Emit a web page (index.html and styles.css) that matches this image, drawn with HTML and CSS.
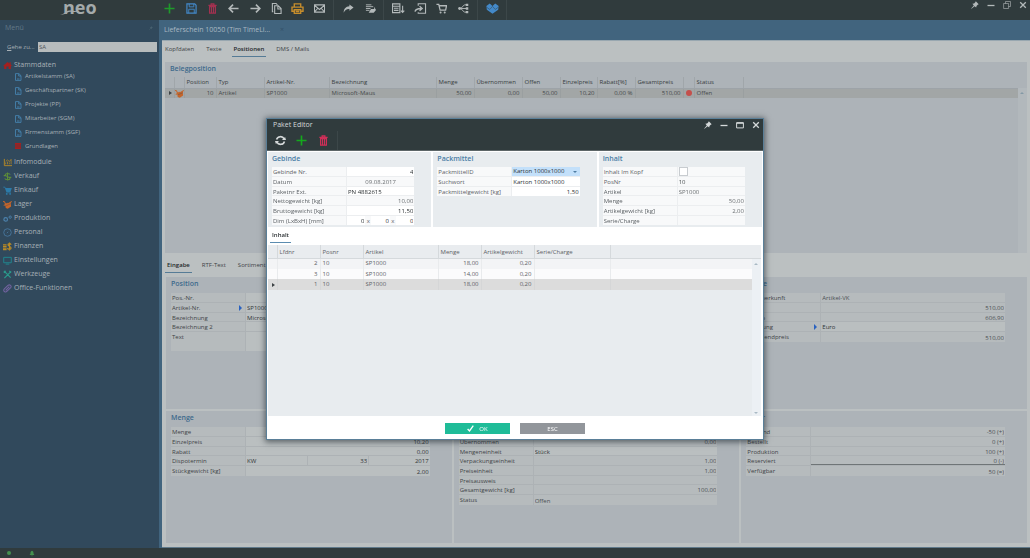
FILE: index.html
```html
<!DOCTYPE html>
<html lang="de">
<head>
<meta charset="utf-8">
<title>neo – Paket Editor</title>
<link rel="stylesheet" href="styles.css">
</head>
<body>
<svg class="defs" aria-hidden="true">
  <symbol id="plus" viewBox="0 0 12 12"><path d="M6 .5v11M.5 6h11" stroke="currentColor" stroke-width="1.8"/></symbol>
  <symbol id="save" viewBox="0 0 12 12" fill="none" stroke="currentColor"><path d="M1 1h8.500l1.500 1.500V11H1z" stroke-width="1.300"/><path d="M3.500 1v3.200h5V1M3 11V6.800h6V11" /></symbol>
  <symbol id="trash" viewBox="0 0 12 12" fill="none" stroke="currentColor"><path d="M1.500 2.500h9M4.500 2V1h3v1" stroke-width="1.300"/><path d="M2.800 4h6.400v7H2.800zM4.900 4v7M7.100 4v7" stroke-width="1.300"/></symbol>
  <symbol id="left" viewBox="0 0 12 12" fill="none" stroke="currentColor" stroke-width="1.800"><path d="M11.500 6H1.500M5.500 1.800L1.300 6l4.200 4.200"/></symbol>
  <symbol id="right" viewBox="0 0 12 12" fill="none" stroke="currentColor" stroke-width="1.800"><path d="M.5 6h10M6.500 1.800L10.700 6l-4.200 4.200"/></symbol>
  <symbol id="copy" viewBox="0 0 12 12" fill="none" stroke="currentColor" stroke-width="1.200"><path d="M4 3h4l3 3v5.500H4zM7.500 3v3.500H11"/><path d="M2.500 9.500h-1v-9h4L7 2"/></symbol>
  <symbol id="print" viewBox="0 0 14 12" fill="none" stroke="currentColor" stroke-width="1.500"><path d="M3.500 4V1h7v3M3 9H1V4.500h12V9h-2M3.500 7.300h7v4h-7zM5 9.300h4"/></symbol>
  <symbol id="mail" viewBox="0 0 12 12" fill="none" stroke="currentColor" stroke-width="1.200"><path d="M.5 2h11v8H.5zM.5 2.500L6 7l5.500-4.500M.8 9.500L4 6M11.200 9.500L8 6"/></symbol>
  <symbol id="forward" viewBox="0 0 12 12"><path d="M7 1.500L11.500 5 7 8.500v-2C4 6.200 2.200 7.500.8 10.500.6 6.500 3 3.700 7 3.500z" fill="currentColor"/></symbol>
  <symbol id="note" viewBox="0 0 12 12" fill="none" stroke="currentColor"><path d="M1 2h6M1 4h8M1 6h5M1 8h4"/><path d="M4 10.500l2.500-4H10V4l2 3.500-2.500 3z" fill="currentColor" stroke="none"/></symbol>
  <symbol id="list" viewBox="0 0 14 12" fill="none" stroke="currentColor"><path d="M.5 1h8v9.500h-8zM.5 3.500h8M2 5.800h5M2 8h5" stroke-width="1.200"/><path d="M11.500 3v7M9.700 8.200l1.800 2 1.800-2" stroke-width="1.200"/></symbol>
  <symbol id="import" viewBox="0 0 13 12" fill="none" stroke="currentColor"><path d="M4 3V.8h8v10.400H4V10" stroke-width="1.200"/><path d="M.5 9.500C1 7 3 6 7 6M5.500 3.500L8.300 6 5.500 8.500" stroke-width="1.500"/></symbol>
  <symbol id="cart" viewBox="0 0 12 12"><path d="M.5 1.500H3l1.500 6.300h6L11.500 3H3.500" fill="none" stroke="currentColor" stroke-width="1.400"/><circle cx="5" cy="10.300" r="1.100" fill="currentColor"/><circle cx="9.500" cy="10.300" r="1.100" fill="currentColor"/></symbol>
  <symbol id="basket" viewBox="0 0 12 12"><path d="M.3 1h2.500l.6 1.500h8.400L10 8H4.500L2.200 2H.3z" fill="currentColor"/><path d="M4.500 9h6" stroke="currentColor"/><circle cx="5" cy="10.500" r="1.200" fill="currentColor"/><circle cx="9.500" cy="10.500" r="1.200" fill="currentColor"/></symbol>
  <symbol id="share" viewBox="0 0 12 12"><path d="M2 6h8M3 6l4-4h2M3 6l4 4h2" fill="none" stroke="currentColor"/><circle cx="1.800" cy="6" r="1.600" fill="currentColor"/><path d="M8.500.7h2.700v2.600H8.500zM8.500 4.700h2.700v2.600H8.500zM8.500 8.700h2.700v2.600H8.500z" fill="currentColor"/></symbol>
  <symbol id="heart" viewBox="0 0 14 12"><path d="M4 .5L7 3.300 10 .5l3.700 2.800-.5 4L7 11.800.8 7.300l-.5-4z" fill="currentColor"/><path d="M.5 4.500L4 7l3-3.300L10 7l3.500-2.500" fill="none" stroke="#303b3d" stroke-width=".5"/></symbol>
  <symbol id="refresh" viewBox="0 0 12 12"><path d="M1.700 5a4.500 4.500 0 0 1 8.300-.8M10.300 7a4.500 4.500 0 0 1-8.300.8" fill="none" stroke="currentColor" stroke-width="1.700"/><path d="M7.600 5.500H12L11 2.200zM4.400 6.500H0l1 3.300z" fill="currentColor"/></symbol>
  <symbol id="pin" viewBox="0 0 8 8"><path d="M4.800.3l2.900 2.900-1 .5-1.200 1.200-.3 1.700L3.600 5.200.5 7.800.2 7.500 2.800 4.400 1.400 2.800l1.700-.3 1.200-1.200z" fill="currentColor"/></symbol>
  <symbol id="min" viewBox="0 0 8 8"><path d="M.5 4.500h7" stroke="currentColor" stroke-width="1.300"/></symbol>
  <symbol id="max" viewBox="0 0 8 8"><path d="M.6 1.600h6.800v5.300H.6zM.6 2.300h6.800" fill="none" stroke="currentColor"/></symbol>
  <symbol id="restore" viewBox="0 0 8 8"><path d="M.6 2.500h5v5h-5zM2.500 2.500v-2h5v5h-2" fill="none" stroke="currentColor" stroke-width=".6"/></symbol>
  <symbol id="close" viewBox="0 0 8 8"><path d="M1.200 1.200l5.600 5.600M6.800 1.200L1.200 6.800" stroke="currentColor" stroke-width="1.300"/></symbol>
  <symbol id="home" viewBox="0 0 10 10"><path d="M5 1L0 5.500h1.300V9h2.500V6.200h2.400V9h2.500V5.500H10L8.500 4V1.500H7.200v1.300z" fill="currentColor"/></symbol>
  <symbol id="doc" viewBox="0 0 8 8"><path d="M1.500.6h3.400L7 2.700v4.700H1.500zM4.700.8V3H7M3 6h2.500" fill="none" stroke="currentColor" stroke-width=".8"/></symbol>
  <symbol id="rows" viewBox="0 0 8 8"><path d="M1 1h6v6H1z" fill="currentColor"/><path d="M1 3h6M1 5h6" stroke="#31495c" stroke-width=".4"/></symbol>
  <symbol id="chart" viewBox="0 0 10 10" fill="none" stroke="currentColor"><path d="M1.500 1v7.500H10" /><path d="M3 7V5M5 7V4M7 7V5M3 4l2-2 2 2 2-2.500V7" stroke-width=".8"/></symbol>
  <symbol id="coin" viewBox="0 0 10 10" fill="none" stroke="currentColor"><path d="M8 3C7.500 1.500 3 .8 2.500 3S8 5.500 7.800 7.300 2.500 8.800 2 7M5 .5v9M.8 4h2.700M6.500 6h2.700" stroke-width="1.200"/></symbol>
  <symbol id="box" viewBox="0 0 10 10"><path d="M0 1.200l1.800.3L3.300 4l1.500-1 .7.500L9.500 1l.5 1-1.300 1L9 7.200 5.300 9.600 3 8.800 2.600 6 1 6.500l-.5-1 1.700-.8L1.300 2.500 0 2.200z" fill="currentColor"/><path d="M3.300 6.500L8.500 4.200" stroke="#31495c" stroke-width=".4"/></symbol>
  <symbol id="gears" viewBox="0 0 10 10" fill="none" stroke="currentColor"><circle cx="3" cy="6" r="2" stroke-width="1.300"/><circle cx="8" cy="3.500" r="1.300"/></symbol>
  <symbol id="clock" viewBox="0 0 10 10" fill="none" stroke="currentColor" stroke-width=".8"><circle cx="5" cy="5" r="4.200"/><path d="M4.300 5.700l1.500-1.500"/></symbol>
  <symbol id="money" viewBox="0 0 10 10" fill="none" stroke="currentColor"><path d="M0 3.200h4M0 5h4M0 6.800h4M0 8.500h4" stroke-width="1.200"/><path d="M9 3C8.500 1.500 5.500 1.500 5.500 3S9.200 5 9 6.800 5.300 8.500 5 6.800M7.200.5v9" stroke-width="1.300"/></symbol>
  <symbol id="screen" viewBox="0 0 10 10" fill="none" stroke="currentColor"><path d="M.8 1.500h8.400v6H.8zM3 9h4"/></symbol>
  <symbol id="tools" viewBox="0 0 10 10" fill="none" stroke="currentColor"><path d="M1 1l7.500 7.500M9 1.500L1.500 9M1 3l2-2M7 1l2 2" stroke-width="1.400"/></symbol>
  <symbol id="clip" viewBox="0 0 10 10" fill="none" stroke="currentColor"><path d="M3 7l4-4.200M2.500 8.800C.5 8.500.5 6.500 1.500 5.500L5.500 1.500c2-1.500 4.500.5 3 2.500l-4.300 4.300C3.500 9 3 9 2.500 8.800z" stroke-width="1.200"/></symbol>
  <symbol id="check" viewBox="0 0 8 8"><path d="M.7 4.500l2.200 2.300L7.200.8" fill="none" stroke="currentColor" stroke-width="1.500"/></symbol>
  <symbol id="bell" viewBox="0 0 8 8"><path d="M4 .3C5.800.8 6 2 6 4l1.200 2H.8L2 4c0-2 .2-3.200 2-3.700zM3 6.700h2L4 8z" fill="currentColor"/></symbol>
</svg>

<div class="app">
  <header class="topbar">
    <div class="logo">
      <svg class="swoosh" viewBox="0 0 20 6"><path d="M0 5.500C5 5.500 4 2.500 9 1.500c4-.5 6 1 11 1-5 1.500-8-.3-11 .5C6 4 5 6 0 5.500z" fill="currentColor"/></svg>neo
    </div>
    <nav class="tools" aria-label="Werkzeugleiste">
      <div class="group g8">
        <button class="green" aria-label="Neu"><svg><use href="#plus"/></svg></button>
        <button class="blue" aria-label="Speichern"><svg><use href="#save"/></svg></button>
        <button class="red" aria-label="Löschen"><svg><use href="#trash"/></svg></button>
        <button aria-label="Zurück"><svg><use href="#left"/></svg></button>
        <button aria-label="Weiter"><svg><use href="#right"/></svg></button>
        <button aria-label="Kopieren"><svg><use href="#copy"/></svg></button>
        <button class="amber" aria-label="Drucken"><svg class="wide"><use href="#print"/></svg></button>
        <button aria-label="E-Mail"><svg><use href="#mail"/></svg></button>
      </div>
      <div class="group g2">
        <button aria-label="Weiterleiten"><svg><use href="#forward"/></svg></button>
        <button aria-label="Notiz"><svg><use href="#note"/></svg></button>
      </div>
      <div class="group g4">
        <button aria-label="Liste"><svg class="wide"><use href="#list"/></svg></button>
        <button aria-label="Import"><svg class="wide"><use href="#import"/></svg></button>
        <button aria-label="Warenkorb"><svg><use href="#cart"/></svg></button>
        <button aria-label="Verknüpfen"><svg><use href="#share"/></svg></button>
      </div>
      <div class="group g1">
        <button class="blue" aria-label="Favoriten"><svg class="wide"><use href="#heart"/></svg></button>
      </div>
    </nav>
    <div class="winbtns">
      <button aria-label="Anheften"><svg><use href="#pin"/></svg></button>
      <button aria-label="Minimieren"><svg><use href="#min"/></svg></button>
      <button aria-label="Wiederherstellen"><svg><use href="#restore"/></svg></button>
      <button aria-label="Schließen"><svg><use href="#close"/></svg></button>
    </div>
  </header>

  <aside class="side">
    <div class="menuhead"><span>Menü</span><svg><use href="#pin"/></svg></div>
    <div class="goto"><label for="goto"><u>G</u>ehe zu...</label><input id="goto" value="SA"></div>
    <nav aria-label="Menü">
      <a href="#" class="item"><svg class="c-red"><use href="#home"/></svg>Stammdaten</a>
      <div class="sub">
        <a href="#"><svg><use href="#doc"/></svg>Artikelstamm (SA)</a>
        <a href="#"><svg><use href="#doc"/></svg>Geschäftspartner (SK)</a>
        <a href="#"><svg><use href="#doc"/></svg>Projekte (PP)</a>
        <a href="#"><svg><use href="#doc"/></svg>Mitarbeiter (SGM)</a>
        <a href="#"><svg><use href="#doc"/></svg>Firmenstamm (SGF)</a>
        <a href="#"><svg class="c-red"><use href="#rows"/></svg>Grundlagen</a>
      </div>
      <a href="#" class="item"><svg class="c-amber"><use href="#chart"/></svg>Infomodule</a>
      <a href="#" class="item"><svg class="c-green"><use href="#coin"/></svg>Verkauf</a>
      <a href="#" class="item"><svg class="c-blue"><use href="#basket"/></svg>Einkauf</a>
      <a href="#" class="item"><svg class="c-orange"><use href="#box"/></svg>Lager</a>
      <a href="#" class="item"><svg class="c-steel"><use href="#gears"/></svg>Produktion</a>
      <a href="#" class="item"><svg class="c-steel"><use href="#clock"/></svg>Personal</a>
      <a href="#" class="item"><svg class="c-amber"><use href="#money"/></svg>Finanzen</a>
      <a href="#" class="item"><svg class="c-teal"><use href="#screen"/></svg>Einstellungen</a>
      <a href="#" class="item"><svg class="c-mint"><use href="#tools"/></svg>Werkzeuge</a>
      <a href="#" class="item"><svg class="c-violet"><use href="#clip"/></svg>Office-Funktionen</a>
    </nav>
  </aside>

  <main class="main">
    <div class="doctab"><span>Lieferschein 10050 (Tim TimeLi...</span><button aria-label="Tab schließen">×</button></div>
    <div class="page">
      <div class="tabs">
        <a href="#">Kopfdaten</a><a href="#">Texte</a><a href="#" class="on">Positionen</a><a href="#">DMS / Mails</a>
      </div>
      <section class="panel beleg">
        <h2>Belegposition</h2>
        <table class="grid">
          <colgroup><col class="w9"><col class="w10"><col class="w32"><col class="w48"><col class="w65"><col class="w107"><col class="w38"><col class="w48"><col class="w38"><col class="w37"><col class="w38"><col class="w48"><col class="w11"><col class="w49"><col></colgroup>
          <thead><tr><th></th><th></th><th>Position</th><th>Typ</th><th>Artikel-Nr.</th><th>Bezeichnung</th><th>Menge</th><th>Übernommen</th><th>Offen</th><th>Einzelpreis</th><th>Rabatt[%]</th><th>Gesamtpreis</th><th></th><th>Status</th><th></th></tr></thead>
          <tbody><tr><td><i class="tri"></i></td><td><svg class="c-orange"><use href="#box"/></svg></td><td class="r">10</td><td>Artikel</td><td>SP1000</td><td>Microsoft-Maus</td><td class="r">50,00</td><td class="r">0,00</td><td class="r">50,00</td><td class="r">10,20</td><td class="r">0,00 %</td><td class="r">510,00</td><td><i class="dot"></i></td><td>Offen</td><td></td></tr></tbody>
        </table>
        <div class="scroll"><i class="up"></i></div>
      </section>
      <div class="tabs lower">
        <a href="#" class="on">Eingabe</a><a href="#">RTF-Text</a><a href="#">Sortiment</a>
      </div>
      <div class="panels">
        <section class="panel">
          <h2>Position</h2>
          <div class="form">
            <div class="row"><label for="p1">Pos.-Nr.</label><input id="p1"></div>
            <div class="row"><label for="p2">Artikel-Nr.<i class="go"></i></label><input id="p2" value="SP1000"></div>
            <div class="row"><label for="p3">Bezeichnung</label><input id="p3" value="Microsoft-Maus"></div>
            <div class="row"><label for="p4">Bezeichnung 2</label><input id="p4"></div>
            <div class="row tall"><label for="p5">Text</label><textarea id="p5"></textarea></div>
          </div>
        </section>
        <section class="panel"></section>
        <section class="panel prices">
          <h2>Preise</h2>
          <div class="form">
            <div class="row"><label for="q1">Preisherkunft</label><input id="q1" value="Artikel-VK" readonly></div>
            <div class="row"><label for="q2">Netto</label><input class="r" id="q2" value="510,00" readonly></div>
            <div class="row"><label for="q3">Brutto</label><input class="r" id="q3" value="606,90" readonly></div>
            <div class="row"><label for="q4">Währung<i class="go"></i></label><input id="q4" value="Euro"></div>
            <div class="row"><label for="q5">Zeilenendpreis</label><input class="r" id="q5" value="510,00" readonly></div>
          </div>
        </section>
        <section class="panel">
          <h2>Menge</h2>
          <div class="form">
            <div class="row"><label for="m1">Menge</label><input class="r" id="m1" value="50,00"></div>
            <div class="row"><label for="m2">Einzelpreis</label><input class="r" id="m2" value="10,20"></div>
            <div class="row"><label for="m3">Rabatt</label><input class="r" id="m3" value="0,00"></div>
            <div class="row"><label for="m4">Dispotermin</label><input id="m4" value="KW"><input class="r" aria-label="Woche" value="33"><input class="r" aria-label="Jahr" value="2017"></div>
            <div class="row"><label for="m5">Stückgewicht [kg]</label><input class="r" id="m5" value="2,00"></div>
          </div>
        </section>
        <section class="panel">
          <h2>Einheiten</h2>
          <div class="form">
            <div class="row"><label for="e1">Offen</label><input class="r" id="e1" value="50,00" readonly></div>
            <div class="row"><label for="e2">Übernommen</label><input class="r" id="e2" value="0,00" readonly></div>
            <div class="row"><label for="e3">Mengeneinheit</label><input id="e3" value="Stück"></div>
            <div class="row"><label for="e4">Verpackungseinheit</label><input class="r" id="e4" value="1,00" readonly></div>
            <div class="row"><label for="e5">Preiseinheit</label><input class="r" id="e5" value="1,00" readonly></div>
            <div class="row"><label for="e6">Preisausweis</label><input id="e6" readonly></div>
            <div class="row"><label for="e7">Gesamtgewicht [kg]</label><input class="r" id="e7" value="100,00" readonly></div>
            <div class="row"><label for="e8">Status</label><input id="e8" value="Offen" readonly></div>
          </div>
        </section>
        <section class="panel stock">
          <h2>Lager</h2>
          <div class="form">
            <div class="row"><label for="l1">Bestand</label><input class="r" id="l1" value="-50 (+)" readonly></div>
            <div class="row"><label for="l2">Bestellt</label><input class="r" id="l2" value="0 (+)" readonly></div>
            <div class="row"><label for="l3">Produktion</label><input class="r" id="l3" value="100 (+)" readonly></div>
            <div class="row sum"><label for="l4">Reserviert</label><input class="r" id="l4" value="0 (-)" readonly></div>
            <div class="row"><label for="l5">Verfügbar</label><input class="r" id="l5" value="50 (=)" readonly></div>
          </div>
        </section>
      </div>
    </div>
  </main>
  <footer class="status"><i></i><svg><use href="#bell"/></svg></footer>
</div>

<div class="overlay">
  <div class="modal" role="dialog" aria-labelledby="dlg">
    <header class="mhead">
      <div class="mtitle"><h1 id="dlg">Paket Editor</h1>
        <div class="winbtns">
          <button aria-label="Anheften"><svg><use href="#pin"/></svg></button>
          <button aria-label="Minimieren"><svg><use href="#min"/></svg></button>
          <button aria-label="Maximieren"><svg><use href="#max"/></svg></button>
          <button aria-label="Schließen"><svg><use href="#close"/></svg></button>
        </div>
      </div>
      <div class="group g3">
        <button aria-label="Aktualisieren"><svg><use href="#refresh"/></svg></button>
        <button class="green" aria-label="Neu"><svg><use href="#plus"/></svg></button>
        <button class="red" aria-label="Löschen"><svg><use href="#trash"/></svg></button>
      </div>
    </header>
    <div class="mpanels">
      <section class="panel">
        <h2>Gebinde</h2>
        <div class="form">
          <div class="row"><label for="g1">Gebinde Nr.</label><input class="r" id="g1" value="4"></div>
          <div class="row"><label for="g2">Datum</label><input class="c" id="g2" value="09.08.2017" readonly></div>
          <div class="row"><label for="g3">Paketnr Ext.</label><input id="g3" value="PN 4882615"></div>
          <div class="row"><label for="g4">Nettogewicht [kg]</label><input class="r" id="g4" value="10,00" readonly></div>
          <div class="row"><label for="g5">Bruttogewicht [kg]</label><input class="r" id="g5" value="11,50"></div>
          <div class="row"><label for="g6">Dim (LxBxH) [mm]</label><input class="r" id="g6" value="0"><span>x</span><input class="r" aria-label="Breite" value="0"><span>x</span><input class="r" aria-label="Höhe" value="0"></div>
        </div>
      </section>
      <section class="panel">
        <h2>Packmittel</h2>
        <div class="form">
          <div class="row"><label for="k1">PackmittelID</label><div class="drop"><select id="k1"><option>Karton 1000x1000</option></select></div></div>
          <div class="row"><label for="k2">Suchwort</label><input id="k2" value="Karton 1000x1000"></div>
          <div class="row"><label for="k3">Packmittelgewicht [kg]</label><input class="r" id="k3" value="1,50"></div>
        </div>
      </section>
      <section class="panel">
        <h2>Inhalt</h2>
        <div class="form">
          <div class="row"><label for="i1">Inhalt Im Kopf</label><div class="checkcell"><input type="checkbox" id="i1"></div></div>
          <div class="row"><label for="i2">PosNr</label><input class="soft" id="i2" value="10"></div>
          <div class="row"><label for="i3">Artikel</label><input id="i3" value="SP1000" readonly></div>
          <div class="row"><label for="i4">Menge</label><input class="r" id="i4" value="50,00" readonly></div>
          <div class="row"><label for="i5">Artikelgewicht [kg]</label><input class="r" id="i5" value="2,00" readonly></div>
          <div class="row"><label for="i6">Serie/Charge</label><input id="i6" readonly></div>
        </div>
      </section>
    </div>
    <div class="mtabs"><a href="#">Inhalt</a></div>
    <div class="mgrid">
      <table class="grid">
        <colgroup><col class="w9"><col class="w43"><col class="w43"><col class="w75"><col class="w43"><col class="w53"><col class="w76"><col></colgroup>
        <thead><tr><th></th><th>Lfdnr</th><th>Posnr</th><th>Artikel</th><th>Menge</th><th>Artikelgewicht</th><th>Serie/Charge</th><th></th></tr></thead>
        <tbody>
          <tr><td></td><td class="r">2</td><td>10</td><td>SP1000</td><td class="r">18,00</td><td class="r">0,20</td><td></td><td></td></tr>
          <tr><td></td><td class="r">3</td><td>10</td><td>SP1000</td><td class="r">14,00</td><td class="r">0,20</td><td></td><td></td></tr>
          <tr class="sel"><td><i class="tri"></i></td><td class="r">1</td><td>10</td><td>SP1000</td><td class="r">18,00</td><td class="r">0,20</td><td></td><td></td></tr>
        </tbody>
      </table>
      <div class="scroll"><i class="up"></i><i class="down"></i></div>
    </div>
    <div class="actions">
      <button class="ok"><svg><use href="#check"/></svg>OK</button>
      <button class="esc">ESC</button>
    </div>
  </div>
</div>
</body>
</html>
```

FILE: styles.css
```css
* { box-sizing: border-box; }
html, body { height: 100%; }
body {
  margin: 0;
  font: 6px/10px "Open Sans", "Noto Sans", sans-serif;
  color: #3e4346;
  background: #303b3d;
}
.defs { position: absolute; width: 0; height: 0; }
svg { display: block; flex: none; overflow: visible; }
a { color: inherit; text-decoration: none; }
button, input, select, textarea {
  font: inherit;
  color: inherit;
  border: 0;
  margin: 0;
  padding: 0;
  background: none;
  border-radius: 0;
  min-width: 0;
}
h1, h2 { margin: 0; font-size: 7px; line-height: 10px; font-weight: 400; }

.app {
  display: grid;
  grid-template: 20px 1fr 10px / 162px 1fr;
  min-height: 100%;
}

/* top bar */
.topbar { grid-column: 1 / -1; display: flex; background: #303b3d; color: #b3b9ba; }
.logo {
  width: 159px;
  padding-left: 63px;
  position: relative;
  font-size: 18px;
  line-height: 15px;
  font-weight: 700;
  color: #a4aaab;
}
.swoosh { position: absolute; left: 58px; top: 9px; width: 24px; height: 6px; }
.tools { display: flex; flex: 1; }
.group { display: grid; grid-auto-flow: column; grid-auto-columns: 1fr; align-items: center; height: 20px; padding-bottom: 3px; border-right: 1px solid #3c4749; }
.tools .group { margin-right: 4px; }
.group button { display: flex; justify-content: center; }
.group svg { width: 11px; height: 11px; }
.group svg.wide { width: 13px; height: 11px; }
.g8 { width: 175px; padding-right: 3px; }
.g2 { width: 46px; padding-right: 2px; }
.g4 { width: 90px; padding-right: 3px; }
.g1 { width: 25px; padding-right: 3px; }
.green { color: #1f9a2b; }
.blue { color: #4389c9; }
.red { color: #a23150; }
.amber { color: #c68d2c; }
.winbtns { display: flex; gap: 8px; padding: 1px 3px 0 0; }
.winbtns button { height: 8px; }
.winbtns svg { width: 8px; height: 8px; }

/* side menu */
.side { background: #31495c; border-right: 3px solid #41647e; color: #a7b0b6; padding: 3px 2px 0 0; }
.menuhead { display: flex; justify-content: space-between; padding: 0 4px 0 5px; font-size: 7px; color: #637887; }
.menuhead svg { width: 4px; height: 6px; margin-top: 2px; color: #48606f; }
.goto { display: flex; align-items: center; margin-top: 9px; padding-left: 7px; }
.goto label { width: 31px; }
.goto input { flex: 1; height: 10px; padding-left: 1px; background: #b7bcbd; color: #51565a; }
.side a { display: flex; align-items: center; height: 14px; }
.item { padding-left: 3px; gap: 2px; font-size: 7px; }
.item svg { width: 9px; height: 9px; }
.side nav { padding-top: 6px; }
.sub { padding: 0 0 2px 14px; margin-top: -3px; }
.sub a { gap: 3px; }
.sub svg { width: 8px; height: 8px; color: #4789b8; margin-top: 2px; }
.sub svg.c-red { margin-top: 0; }
.c-red, .sub svg.c-red { color: #a5201f; }
.c-amber { color: #b98a25; }
.c-green { color: #5d8c39; }
.c-blue { color: #2c7ba9; }
.c-orange { color: #c5652a; }
.c-steel { color: #4c82ad; }
.c-teal { color: #1f8a92; }
.c-mint { color: #2a9a8c; }
.c-violet { color: #7263a0; }

/* document area */
.main { display: flex; flex-direction: column; background: #bbc0c1; }
.doctab { display: flex; align-items: center; gap: 10px; height: 20px; padding: 0 2px 1px; background: #41647e; color: #a9b8c2; font-size: 7px; }
.doctab button { color: #335068; }
.page { flex: 1; display: flex; flex-direction: column; padding: 0 3px 4px 3px; border-top: 1px solid #98a7b0; border-bottom: 1px solid #607a8b; }
.tabs { display: flex; align-items: flex-start; gap: 8px; height: 21px; padding-top: 3px; }
.tabs a { padding: 0 2px 2px; border-bottom: 1px solid transparent; }
.tabs a:first-child { margin-left: -2px; }
.tabs .on { border-color: #557b96; color: #222729; font-weight: 600; }
.tabs.lower { height: 24px; padding-top: 7px; }
.tabs.lower a:first-child { margin-left: 0; }
.panel { background: #adb3b8; padding: 2px 6px 0 5px; position: relative; }
.panel h2 { color: #3d6a8c; font-weight: 600; }
.beleg { height: 191px; padding: 2px 0 0; }
.beleg h2 { padding-left: 5px; height: 13px; }
.panels { flex: 1; display: grid; grid-template: 1fr 1fr / 1fr 1fr 1fr; gap: 2px; padding-left: 1px; }

/* data tables */
.grid { width: 100%; border-collapse: collapse; table-layout: fixed; }
.grid th, .grid td { padding: 0 2px; border-right: 1px solid #a0a6aa; white-space: nowrap; font-weight: 400; text-align: left; line-height: 9px; height: 10px; }
.grid th { padding-top: 1px; border-bottom: 1px solid #9da3a8; height: 11px; color: #383d40; }
.grid th:last-child, .grid td:last-child { border-right: 0; }
.grid td.r { text-align: right; }
.grid svg { width: 9px; height: 9px; }
.beleg td { background: #a2a6a6; border-color: #9a9fa0; color: #45494b; }
.beleg td:nth-child(2) { padding: 0; }
.w9 { width: 9px; } .w10 { width: 10px; } .w11 { width: 11px; } .w32 { width: 32px; }
.w37 { width: 37px; } .w38 { width: 38px; } .w43 { width: 43px; } .w48 { width: 48px; }
.w49 { width: 49px; } .w53 { width: 53px; } .w65 { width: 65px; } .w75 { width: 75px; }
.w76 { width: 76px; } .w107 { width: 107px; }
.tri, .go { display: block; width: 0; height: 0; border: 2px solid transparent; border-left: 3px solid #3c4245; border-right: 0; margin-left: 2px; }
.go { border-width: 3px; border-left-color: #2a62c0; border-right: 0; margin: 0 3px 0 auto; }
.dot { display: block; width: 6px; height: 6px; border-radius: 50%; background: #c4504c; }
.scroll { position: absolute; right: 0; top: 26px; bottom: 0; width: 9px; background: #b2b8bc; }
.up, .down { position: absolute; left: 2px; border: 2px solid transparent; }
.up { top: 2px; border-bottom-color: #8499a6; }
.down { bottom: 0; border-top-color: #a9b9c4; }

/* forms */
.form { margin: 4px 16px 0 0; }
.row { display: flex; height: 10px; line-height: 11px; border-bottom: 1px solid #adb2b5; background: #b6bbbd; }
.row:nth-child(3n) { height: 9px; }
.row:last-child { border-bottom: 0; }
.row.tall { height: 19px; }
.row label { display: flex; align-items: flex-start; width: 75px; flex: none; padding-left: 1px; border-right: 1px solid #adb2b5; white-space: nowrap; }
.row input, .row textarea { flex: 1; width: 0; height: 100%; padding: 1px 1px 0; background: #babfc0; color: #303537; resize: none; }
.row input[readonly] { background: none; color: #4b5053; }
.row input + input { border-left: 1px solid #adb2b5; }
.row .r { text-align: right; }
.row .c { text-align: center; }
.row .go { margin-top: 2px; }
.stock label { width: 65px; }
.sum input { border-bottom: 1px solid #6f7577; }

.status { grid-column: 1 / -1; display: flex; align-items: center; gap: 18px; padding-left: 7px; color: #459150; }
.status i { width: 4px; height: 4px; border-radius: 50%; background: currentColor; }
.status svg { width: 6px; height: 7px; }

/* dialog */
.overlay { position: fixed; inset: 0; display: flex; align-items: center; justify-content: center; }
.modal { width: 498px; background: #fff; border: 1px solid #5a7f98; box-shadow: 0 1px 6px 1px rgba(20, 30, 36, .6); color: #5c6165; }
.mhead { background: #303b3d; color: #d5d9da; border-bottom: 1px solid #5d6668; }
.mtitle { display: flex; justify-content: space-between; padding: 1px 0 0 6px; height: 12px; }
.mhead .winbtns { padding: 1px 3px 0 0; }
.mhead .green { color: #14a81d; }
.mhead .red { color: #cf2f58; }
.g3 { width: 71px; height: 19px; padding: 0 3px 1px; }
.mpanels { display: grid; grid-template-columns: 1fr 1fr 1fr; gap: 2px; padding: 1px 1px 0 1px; }
.mpanels .panel { background: #e8ecef; min-height: 75px; padding: 2px 0 2px 4px; }
.mpanels h2 { color: #4b7ea6; }
.mpanels .form { margin: 3px 17px 0 0; }
.mpanels .row { background: #f8f9fa; border-color: #eceef0; }
.mpanels .row label { border-color: #eceef0; }
.mpanels .row input { background: #fff; color: #2b3033; }
.mpanels .row input[readonly], .mpanels .row .soft { background: #f8f9fa; color: #6b6f72; }
.mpanels .row .soft { color: #4b5053; }
.row span { width: 6px; text-align: center; background: #f8f9fa; }
.drop { flex: 1; position: relative; background: #c3e0fa; }
.drop::after { content: ""; position: absolute; right: 3px; top: 4px; border: 2px solid transparent; border-top-color: #4f7da2; border-bottom: 0; }
.drop select { appearance: none; width: 100%; height: 9px; line-height: 9px; padding-left: 1px; color: #2c3134; display: block; }
.checkcell { padding: 0 0 0 1px; }
.mpanels .checkcell input { appearance: none; display: block; width: 9px; height: 9px; padding: 0; border: 1px solid #c8ccd0; background: #fff; }
.mtabs { height: 18px; padding: 3px 0 0 3px; }
.mtabs a { display: inline-block; padding: 0 2px 2px; border-bottom: 1px solid #5b8cb0; color: #2b3033; font-weight: 600; }
.mgrid { position: relative; height: 171px; margin: 0 2px 0 1px; background: #e8ecef; }
.mgrid th { height: 13px; padding-top: 3px; border-color: #d5d9dc; background: #e9ecef; color: #5c6165; }
.mgrid td { height: 11px; border-color: #e9ebed; background: #f3f4f6; }
.mgrid tr:nth-child(2) td { height: 10px; background: #fbfbfc; }
.mgrid .sel td { background: #dcdcdc; border-color: #d5d6d7; }
.mgrid .scroll { top: 14px; background: #ecf0f4; }
.mgrid .up { border-bottom-color: #a9b9c4; }
.actions { display: flex; justify-content: center; gap: 10px; padding: 7px 0 5px; }
.actions button { display: flex; align-items: center; justify-content: center; width: 65px; height: 11px; color: #fff; }
.ok { background: #1fbc98; gap: 5px; }
.ok svg { width: 7px; height: 7px; }
.esc { background: #92969b; }
```
